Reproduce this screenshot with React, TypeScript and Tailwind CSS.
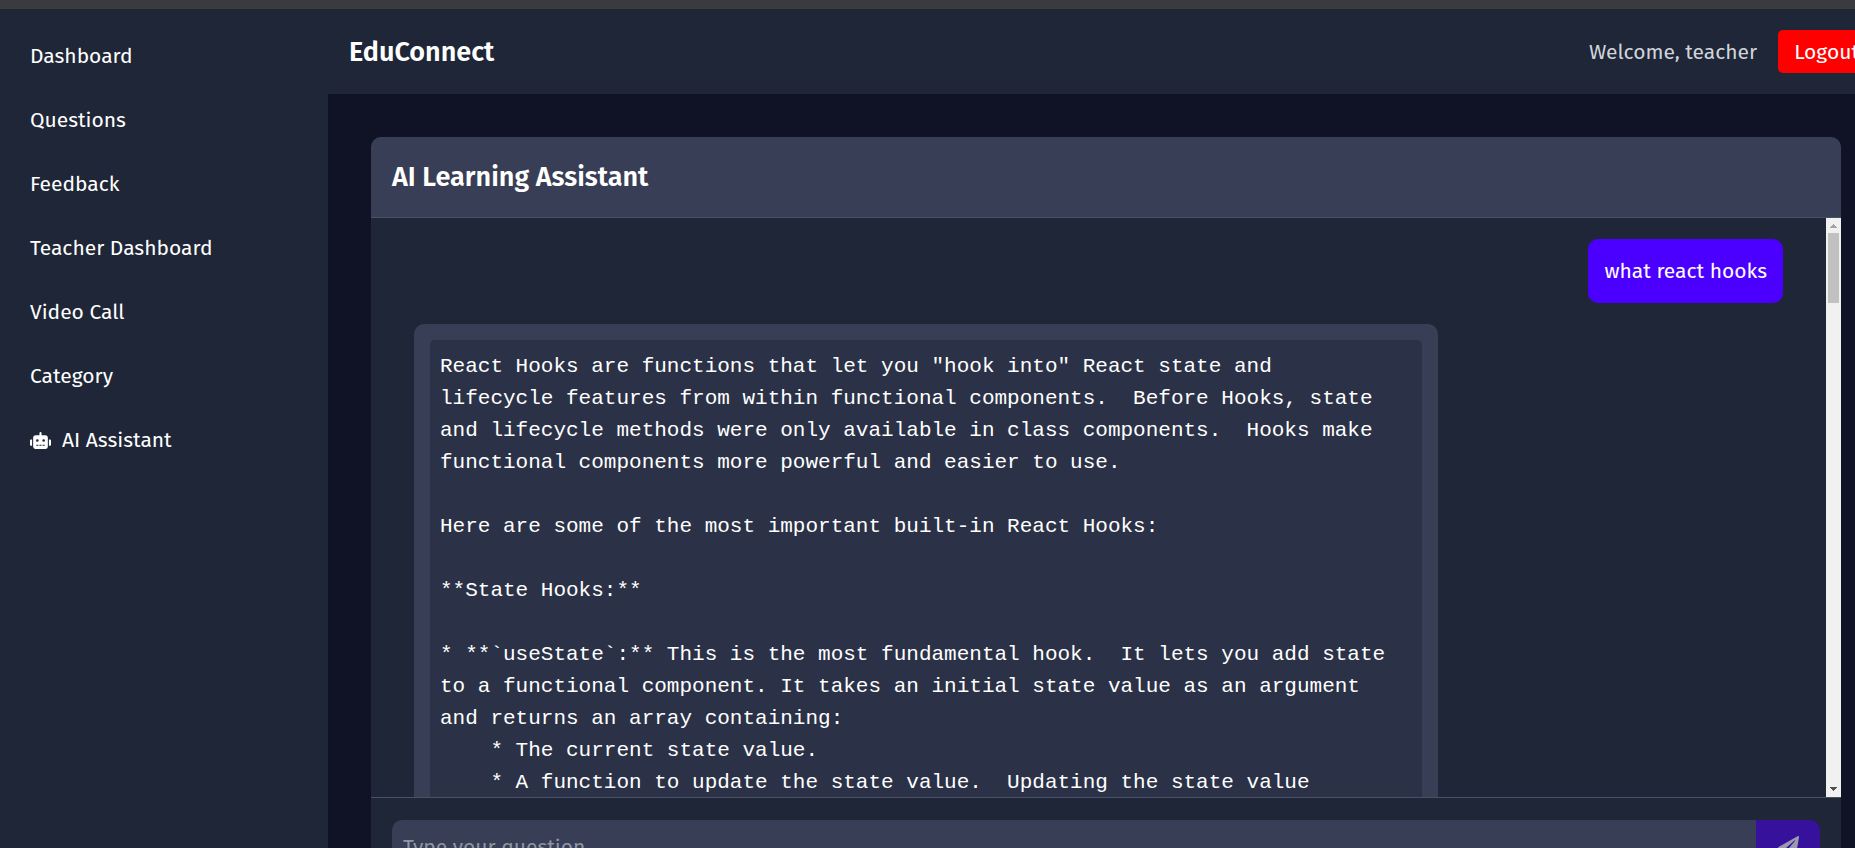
import { FaRobot, FaPaperPlane } from "react-icons/fa";

const navItems = ["Dashboard", "Questions", "Feedback", "Teacher Dashboard", "Video Call", "Category"];

const answer = `React Hooks are functions that let you "hook into" React state and
lifecycle features from within functional components.  Before Hooks, state
and lifecycle methods were only available in class components.  Hooks make
functional components more powerful and easier to use.

Here are some of the most important built-in React Hooks:

**State Hooks:**

* **\`useState\`:** This is the most fundamental hook.  It lets you add state
to a functional component. It takes an initial state value as an argument
and returns an array containing:
    * The current state value.
    * A function to update the state value.  Updating the state value`;

function Sidebar() {
  return (
    <nav className="w-[328px] shrink-0 bg-[#1e2637] pt-[15px]">
      <ul>
        {navItems.map((item) => (
          <li key={item}>
            <a href="#" className="flex h-16 items-center pl-[30px]">{item}</a>
          </li>
        ))}
        <li>
          <a href="#" className="flex h-16 items-center gap-[11px] pl-[30px]">
            <FaRobot size={21} aria-hidden="true" />
            AI Assistant
          </a>
        </li>
      </ul>
    </nav>
  );
}

function Scrollbar() {
  return (
    <div aria-hidden="true" className="flex w-[15px] shrink-0 flex-col items-center justify-between bg-[#f1f1f1]">
      <div className="flex w-full flex-col items-center">
        <svg width="15" height="15" viewBox="0 0 15 15" shapeRendering="crispEdges">
          <path d="M7 6h1v1h1v1h1v1h1v1H4V9h1V8h1V7h1z" fill="#a3a3a3" />
        </svg>
        <div className="h-[70px] w-[11px] bg-[#c1c1c1]" />
      </div>
      <svg width="15" height="15" viewBox="0 0 15 15" shapeRendering="crispEdges">
        <path d="M4 5h7v1h-1v1H9v1H8v1H7V8H6V7H5V6H4z" fill="#505050" />
      </svg>
    </div>
  );
}

export default function App() {
  return (
    <div className="flex h-screen flex-col overflow-hidden bg-[#101225] font-['Fira_Sans','Noto_Sans',sans-serif] text-[21px] leading-8 text-white">
      <div className="h-[9px] shrink-0 bg-[#3b3a3e]" />
      <div className="flex min-h-0 grow">
        <Sidebar />
        <div className="w-[calc(100%-299px)] shrink-0">
          <header className="-mr-3 flex h-[85px] items-center justify-between bg-[#1e2637] px-[21px]">
            <h1 className="text-[27px] font-semibold">EduConnect</h1>
            <div className="flex items-center gap-[21px]">
              <span className="text-[#d1d5db]">Welcome, teacher</span>
              <button className="h-[43px] rounded-[5px] bg-[#ff0000] px-4">Logout</button>
            </div>
          </header>
          <main className="p-[43px]">
            <section className="overflow-hidden rounded-[10px] bg-[#1e2637]">
              <div className="flex h-[81px] items-center border-b border-[#4a5166] bg-[#373e55] px-[21px]">
                <h2 className="text-[27px] font-semibold">AI Learning Assistant</h2>
              </div>
              <div className="flex h-[calc(100vh-269px)]">
                <div className="flex min-w-0 grow flex-col gap-[21px] overflow-hidden px-[43px] pt-[21px]">
                  <p className="self-end rounded-[10px] bg-[#4b00ff] p-4">what react hooks</p>
                  <div className="w-[1024px] max-w-full rounded-[10px] bg-[#373e55] p-4">
                    <pre className="rounded-[5px] bg-[#2b3247] px-[10px] py-[11px] font-['Liberation_Mono',monospace] text-[21px]">
                      {answer}
                    </pre>
                  </div>
                </div>
                <Scrollbar />
              </div>
              <form className="flex border-t border-[#4a5166] px-[21px] py-[22px]">
                <input
                  aria-label="Type your question"
                  placeholder="Type your question"
                  className="h-[53px] min-w-0 grow rounded-l-[10px] bg-[#373e55] px-[11px] placeholder:text-[#9095a3]"
                />
                <button type="button" aria-label="Send" className="flex h-[53px] w-16 items-center justify-center rounded-r-[10px] bg-[#36119c] text-[#9a9cae]">
                  <FaPaperPlane size={21} />
                </button>
              </form>
            </section>
          </main>
        </div>
      </div>
    </div>
  );
}
